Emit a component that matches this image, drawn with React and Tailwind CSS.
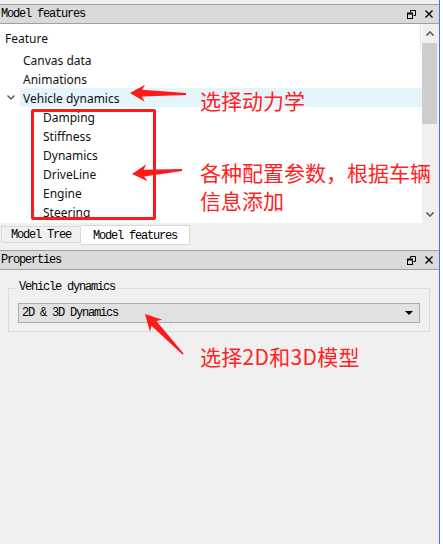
import React from 'react';

const mono = "font-['Liberation_Mono','DejaVu_Sans_Mono',monospace] text-[12px] tracking-[-1.2px] text-black";

// builds a tapered annotation arrow from tip to tail
function arrowPoints(tip, tail, head = 15, wing = 8, neck = 3.2, end = 1) {
  const dx = tail[0] - tip[0];
  const dy = tail[1] - tip[1];
  const len = Math.hypot(dx, dy);
  const ux = dx / len, uy = dy / len;
  const px = -uy, py = ux;
  const at = (d, w) => [tip[0] + ux * d + px * w, tip[1] + uy * d + py * w];
  const pts = [
    tip,
    at(head, wing),
    at(head - 3, neck),
    [tail[0] + px * end, tail[1] + py * end],
    [tail[0] - px * end, tail[1] - py * end],
    at(head - 3, -neck),
    at(head, -wing),
  ];
  return pts.map(p => p.map(v => v.toFixed(1)).join(',')).join(' ');
}

function FloatIcon() {
  return (
    <svg width="9" height="9" viewBox="0 0 9 9" className="block">
      <path d="M3.5 0.5h5v5h-2" fill="none" stroke="#000" strokeWidth="1" />
      <path d="M3.5 2.5v-2" fill="none" stroke="#000" strokeWidth="1" />
      <rect x="0.5" y="3.5" width="5" height="5" fill="none" stroke="#000" strokeWidth="1" />
      <path d="M0 3.5h6" stroke="#000" strokeWidth="2" />
    </svg>
  );
}

function CloseIcon() {
  return (
    <svg width="8" height="8" viewBox="0 0 8 8" className="block">
      <path d="M0.5 0.5l7 7M7.5 0.5l-7 7" stroke="#000" strokeWidth="1.4" />
    </svg>
  );
}

function TitleBar({ title }) {
  return (
    <div className="h-[19px] bg-[#dadada] border-b border-[#a0a0a0] flex items-center pl-[1px] pr-[6px]">
      <span className={`${mono} flex-1`}>{title}</span>
      <div className="flex items-center gap-[9px]">
        <FloatIcon />
        <CloseIcon />
      </div>
    </div>
  );
}

function Chevron({ up }) {
  return (
    <svg width="8" height="5" viewBox="0 0 8 5" className="block">
      <path d={up ? 'M0.5 4.5L4 1l3.5 3.5' : 'M0.5 0.5L4 4l3.5-3.5'} fill="none" stroke="#606060" strokeWidth="1.6" />
    </svg>
  );
}

const children = ['Damping', 'Stiffness', 'Dynamics', 'DriveLine', 'Engine', 'Steering'];

export default function App() {
  return (
    <div className="relative w-[443px] h-[544px] bg-[#f0f0f0] overflow-hidden flex">
      <div className="w-[439px] flex flex-col">
        <div className="h-[5px] border-b border-[#a0a0a0]" />
        <TitleBar title="Model features" />

        {/* tree */}
        <div className="h-[199px] flex">
          <div className="flex-1 bg-white overflow-hidden font-['Noto_Sans',sans-serif] text-[12px] text-[#111]">
            <div className="h-[26px] flex items-center pl-[5px] pt-[3px] relative">
              Feature
              <div className="absolute right-[1px] top-0 h-[26px] w-px bg-[#e5e5e5]" />
            </div>
            <div className="h-[19px] flex items-center pt-[2px] pl-[23px]">Canvas data</div>
            <div className="h-[19px] flex items-center pt-[2px] pl-[23px]">Animations</div>
            <div className="h-[19px] flex items-center">
              <div className="w-[20px] flex justify-center pl-[2px]">
                <svg width="8" height="5" viewBox="0 0 8 5" className="block">
                  <path d="M0.5 0.5L4 4l3.5-3.5" fill="none" stroke="#555" strokeWidth="1.4" />
                </svg>
              </div>
              <div className="flex-1 h-[19px] flex items-center pt-[2px] pl-[3px] bg-[#e5f3fb]">Vehicle dynamics</div>
            </div>
            {children.map(c => (
              <div key={c} className="h-[19px] flex items-center pt-[2px] pl-[43px]">{c}</div>
            ))}
          </div>
          <div className="w-[15px] bg-[#f0f0f0] flex flex-col items-center">
            <div className="h-[19px] flex items-center justify-center"><Chevron up /></div>
            <div className="w-[15px] h-[81px] bg-[#cdcdcd]" />
            <div className="flex-1" />
            <div className="h-[17px] flex items-center justify-center"><Chevron /></div>
          </div>
          <div className="w-[2px]" />
        </div>

        {/* tabs */}
        <div className="h-[27px] flex items-start pt-[2px] pl-[1px]">
          <div className={`${mono} h-[17px] mt-[1px] w-[80px] border border-[#d9d9d9] bg-[#f0f0f0] flex items-center pl-[9px]`}>Model Tree</div>
          <div className={`${mono} h-[20px] w-[109px] border border-[#d9d9d9] border-l-0 bg-white flex items-center pl-[12px] pt-[1px]`}>Model features</div>
        </div>

        <div className="border-t border-[#a0a0a0]">
          <TitleBar title="Properties" />
        </div>

        {/* properties */}
        <div className="flex-1 pt-[18px] pl-[8px] pr-[9px]">
          <div className="relative border border-[#dcdcdc] h-[44px] px-[9px] pt-[14px]">
            <span className={`${mono} absolute left-[8px] -top-[9px] px-[2px] bg-[#f0f0f0] leading-[14px]`}>Vehicle dynamics</span>
            <div className="h-[20px] border border-[#adadad] bg-[#e1e1e1] flex items-center pl-[3px] pr-[6px]">
              <span className={`${mono} flex-1`}>2D &amp; 3D Dynamics</span>
              <svg width="8" height="4" viewBox="0 0 8 4" className="block">
                <path d="M0 0h8L4 4z" fill="#000" />
              </svg>
            </div>
          </div>
        </div>
      </div>
      <div className="w-px bg-[#2b7de9]" />
      <div className="flex-1 bg-white" />

      {/* annotations */}
      <div className="absolute left-[31px] top-[109px] w-[125px] h-[111px] border-[3px] border-[#ff1a1a] rounded-[2px]" />
      <svg className="absolute left-0 top-0 pointer-events-none" width="443" height="544">
        <polygon points={arrowPoints([130, 93], [186, 94], 15, 8.5, 3.4, 1)} fill="#ff1a1a" />
        <polygon points={arrowPoints([132, 174], [182, 170], 15, 8.5, 3.4, 1)} fill="#ff1a1a" />
        <polygon points={arrowPoints([145, 314], [183, 354], 16, 8.5, 3.4, 0.8)} fill="#ff1a1a" />
      </svg>
      <div className="absolute left-[200px] top-[90px] font-['Noto_Sans_CJK_SC',sans-serif] text-[21px] leading-[21px] text-[#ff2222]">选择动力学</div>
      <div className="absolute left-[200px] top-[158px] font-['Noto_Sans_CJK_SC',sans-serif] text-[21px] leading-[28px] text-[#ff2222]">
        各种配置参数，根据车辆<br />信息添加
      </div>
      <div className="absolute left-[200px] top-[346px] font-['Noto_Sans_CJK_SC',sans-serif] text-[21px] leading-[21px] text-[#ff2222] tracking-[0.3px]">选择2D和3D模型</div>
    </div>
  );
}
